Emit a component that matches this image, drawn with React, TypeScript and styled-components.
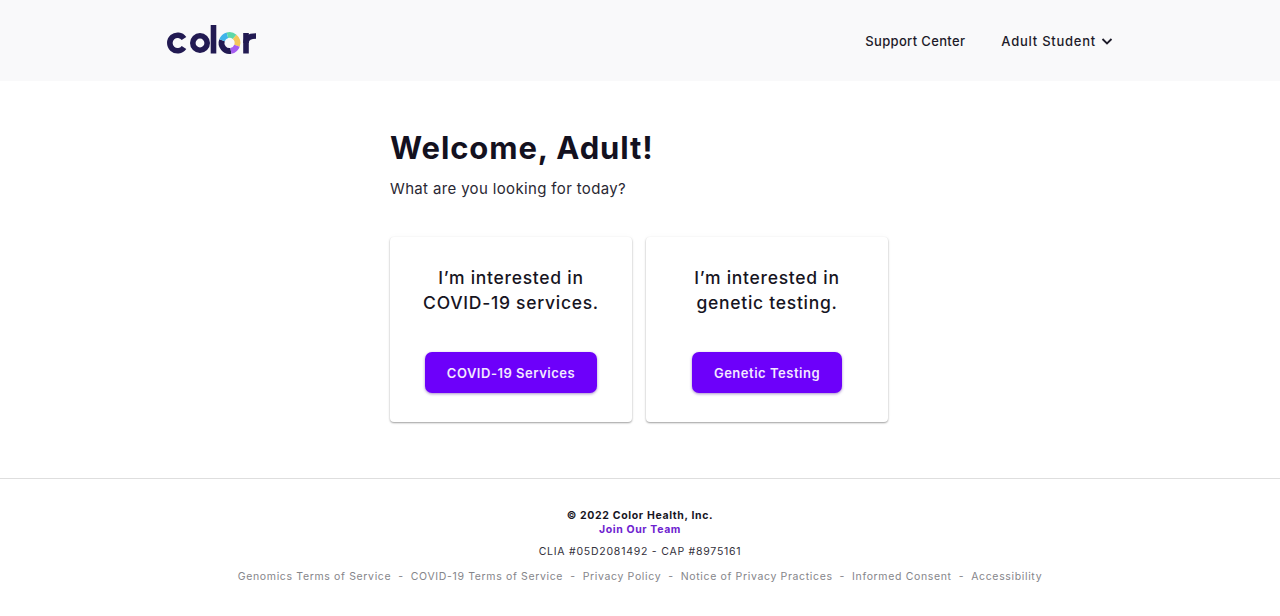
import * as React from 'react';
import { createGlobalStyle, styled } from 'styled-components';

const GlobalStyle = createGlobalStyle`
  html, body {
    margin: 0;
    padding: 0;
    background: #fff;
    font-family: Inter, "Liberation Sans", sans-serif;
    color: #13111f;
  }
`;

const Page = styled.div`
  display: flex;
  flex-direction: column;
  width: 1280px;
  height: 616px;
  overflow: hidden;
`;

const Header = styled.header`
  display: flex;
  align-items: center;
  justify-content: space-between;
  box-sizing: border-box;
  height: 81px;
  padding: 0 166px 0 167px;
  background: #f9f9fa;
`;

const Nav = styled.nav`
  display: flex;
  align-items: center;
  gap: 36px;
`;

const NavItem = styled.a<{ $wide?: boolean }>`
  display: flex;
  align-items: center;
  gap: 4px;
  font-size: 13px;
  font-weight: 500;
  letter-spacing: ${(p) => (p.$wide ? '0.75px' : '0.35px')};
  color: #1d1b29;
`;

const Main = styled.main`
  box-sizing: border-box;
  height: 397px;
  width: 498px;
  margin: 0 auto 0 390px;
  padding-top: 48px;
`;

const Title = styled.h1`
  margin: 0;
  font-size: 31px;
  line-height: 38px;
  font-weight: 700;
  letter-spacing: 0.9px;
  color: #13111f;
`;

const Subtitle = styled.p`
  margin: 12px 0 0;
  font-size: 15px;
  line-height: 20px;
  letter-spacing: 0.35px;
  color: #2a2833;
`;

const Cards = styled.div`
  display: flex;
  gap: 14px;
  margin-top: 38px;
`;

const Card = styled.section`
  display: flex;
  flex-direction: column;
  align-items: center;
  box-sizing: border-box;
  width: 242px;
  height: 185px;
  padding-top: 28px;
  background: #fff;
  border-radius: 4px;
  box-shadow: 0 1px 2px rgba(0, 0, 0, 0.38), 0 -1px 6px rgba(0, 0, 0, 0.02);
`;

const CardText = styled.p`
  margin: 0;
  font-size: 17.5px;
  line-height: 25px;
  font-weight: 500;
  letter-spacing: 0.72px;
  text-align: center;
  color: #17151f;
`;

const Button = styled.button`
  height: 41px;
  margin-top: 37px;
  padding: 0 22px;
  border: none;
  border-radius: 7px;
  background: #6d00fa;
  box-shadow: 0 1px 3px rgba(60, 0, 140, 0.45);
  font-family: inherit;
  font-size: 13px;
  font-weight: 600;
  letter-spacing: 0.52px;
  color: #f3e8ff;
`;

const Footer = styled.footer`
  display: flex;
  flex-direction: column;
  align-items: center;
  box-sizing: border-box;
  flex: 1;
  padding-top: 30px;
  border-top: 1px solid #dedede;
`;

const Copyright = styled.div`
  font-size: 10.5px;
  line-height: 14px;
  font-weight: 700;
  letter-spacing: 0.65px;
  color: #17151f;
`;

const JoinLink = styled.a`
  font-size: 10.5px;
  line-height: 14px;
  font-weight: 700;
  letter-spacing: 0.62px;
  color: #6e22cf;
`;

const Clia = styled.div`
  margin-top: 8px;
  font-size: 10.5px;
  line-height: 14px;
  letter-spacing: 0.76px;
  color: #33313b;
`;

const Links = styled.div`
  display: flex;
  gap: 7px;
  margin-top: 11px;
  font-size: 10.5px;
  line-height: 14px;
  letter-spacing: 0.65px;
  color: #85858a;
`;

const LogoMark = styled.svg`
  display: block;
  width: 90px;
  height: 30px;
  margin-top: -1px;
`;

function Logo() {
  return (
    <LogoMark viewBox="0 0 90 30" fill="none" aria-label="color">
      <g stroke="#221a52" strokeWidth="5.600">
        <path d="M17 13.500a7.800 7.800 0 1 0 0 9" />
        <circle cx="33" cy="18" r="7.200" />
        <path d="M46.500 0v28.500" />
        <path d="M79 28.500V8" />
        <path d="M79 18c0-4.500 3.500-7 10-7" />
      </g>
      <g strokeWidth="5.800">
        <path d="M63.890 25.880A8 8 0 0 1 55 15.260" stroke="#221a52" />
        <path d="M55 15.260A8 8 0 0 1 60.430 10.270" stroke="#3fb4ea" />
        <path d="M60.430 10.270A8 8 0 0 1 67.640 11.870" stroke="#5fd8a8" />
        <path d="M67.640 11.870A8 8 0 0 1 70 20.740" stroke="#f5c75a" />
        <path d="M70 20.740A8 8 0 0 1 63.890 25.880" stroke="#a65df0" />
      </g>
    </LogoMark>
  );
}

function Chevron() {
  return (
    <svg width="14" height="14" viewBox="0 0 14 14" fill="none">
      <path d="M2.500 5l4.500 4.500L11.500 5" stroke="#1d1b29" strokeWidth="1.800" />
    </svg>
  );
}

const legalLinks = [
  'Genomics Terms of Service',
  'COVID-19 Terms of Service',
  'Privacy Policy',
  'Notice of Privacy Practices',
  'Informed Consent',
  'Accessibility',
];

export default function App() {
  return (
    <Page>
      <GlobalStyle />
      <Header>
        <Logo />
        <Nav>
          <NavItem>Support Center</NavItem>
          <NavItem $wide>
            Adult Student <Chevron />
          </NavItem>
        </Nav>
      </Header>
      <Main>
        <Title>Welcome, Adult!</Title>
        <Subtitle>What are you looking for today?</Subtitle>
        <Cards>
          <Card>
            <CardText>
              I’m interested in
              <br />
              COVID-19 services.
            </CardText>
            <Button>COVID-19 Services</Button>
          </Card>
          <Card>
            <CardText>
              I’m interested in
              <br />
              genetic testing.
            </CardText>
            <Button>Genetic Testing</Button>
          </Card>
        </Cards>
      </Main>
      <Footer>
        <Copyright>© 2022 Color Health, Inc.</Copyright>
        <JoinLink>Join Our Team</JoinLink>
        <Clia>CLIA #05D2081492 - CAP #8975161</Clia>
        <Links>
          {legalLinks.map((label, i) => (
            <React.Fragment key={label}>
              {i > 0 && <span>-</span>}
              <span>{label}</span>
            </React.Fragment>
          ))}
        </Links>
      </Footer>
    </Page>
  );
}
